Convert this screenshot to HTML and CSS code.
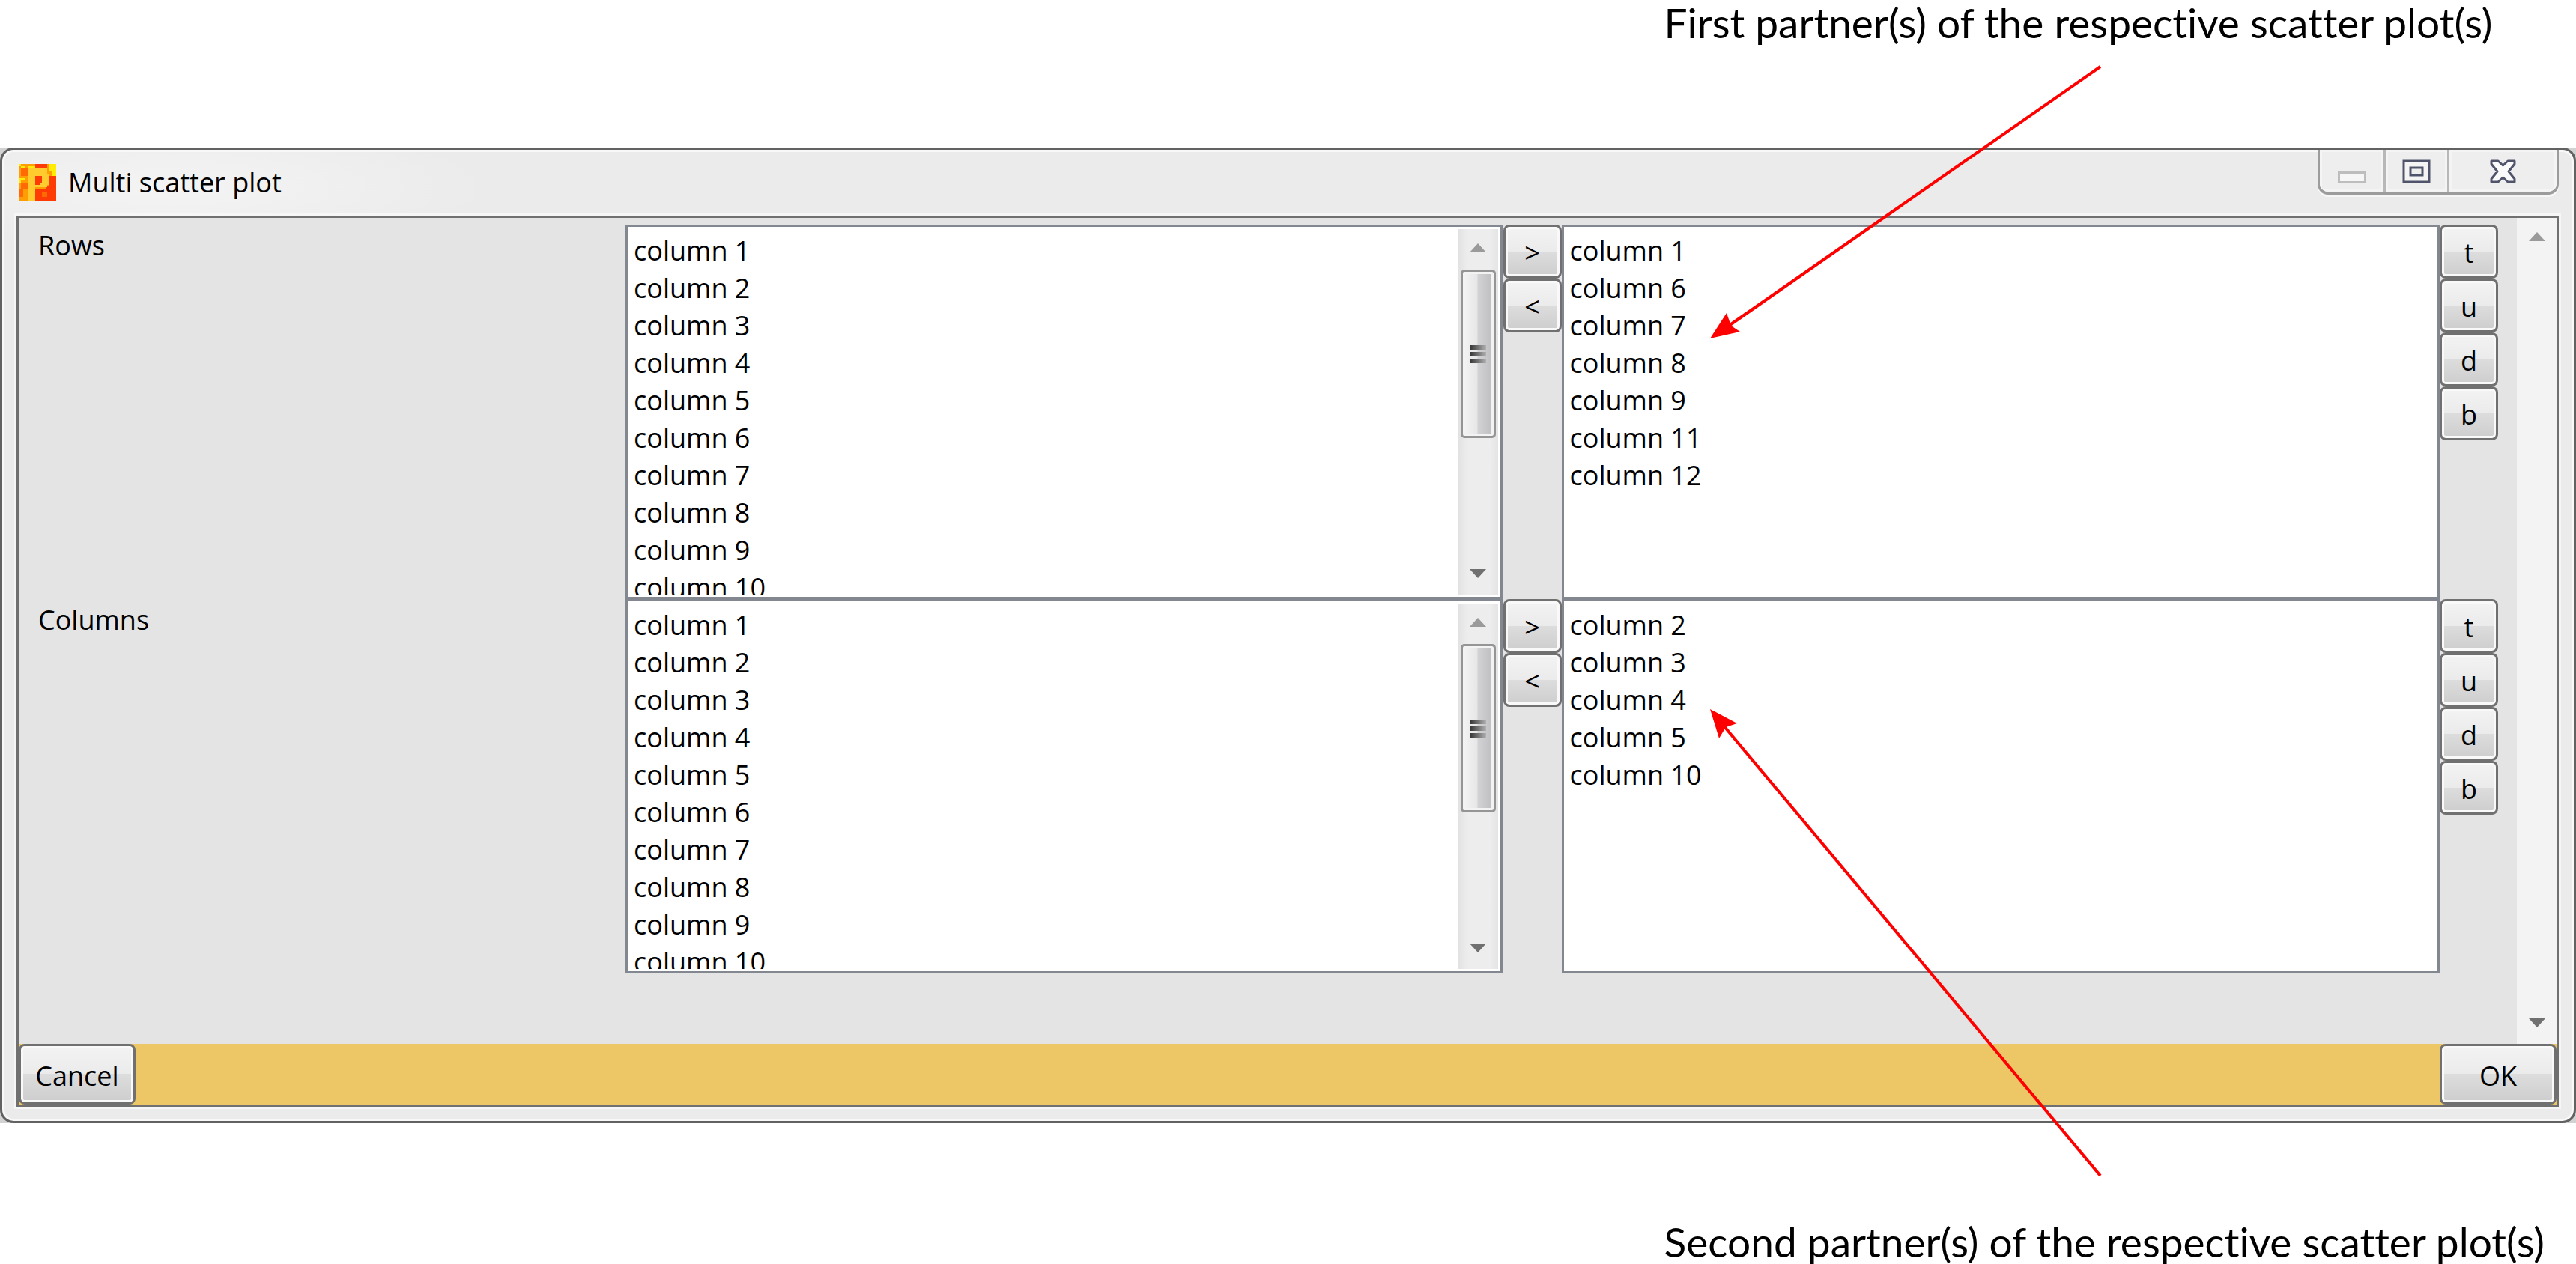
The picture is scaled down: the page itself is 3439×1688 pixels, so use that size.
FILE: index.html
```html
<!DOCTYPE html>
<html lang="en">
<head>
<meta charset="utf-8">
<title>Multi scatter plot</title>
<link rel="stylesheet" href="styles.css">
</head>
<body>
<main class="figure">
  <p class="note note-first">First partner(s) of the respective scatter plot(s)</p>

  <div class="window-corners">
    <section class="window" aria-labelledby="window-title">
      <header class="titlebar">
        <svg class="app-icon" viewBox="0 0 16 16" shape-rendering="crispEdges" aria-hidden="true">
          <path fill="#ff9d05" d="M0 0h16v16H0z"/>
          <path fill="#ff3b05" d="M7 0h5v2H7zM13 5h3v11H7V11h4l2-2zM7 5h3v4H7z"/>
          <path fill="#ff6a05" d="M1 2h3v3H1zM1 8h3v3H1zM0 11h2v3H0zM10 12h2v2h-2z"/>
          <path fill="#ffec05" d="M0 0h1v1H0zM1 1h2v1H1zM4 1h3v1H4zM13 0h3v5h-2V3h-1zM0 6h3v1H1v1H0z"/>
          <path fill="#ffcb2e" d="M4 2h8v2h1v5h-1v1H7v6H4zM7 5v4h2V8h1V5z" fill-rule="evenodd"/>
        </svg>
        <h1 class="window-title" id="window-title">Multi scatter plot</h1>
        <div class="caption-buttons">
          <button class="caption-button" type="button" aria-label="Minimize" disabled>
            <svg class="caption-icon" width="38" height="32" viewBox="0 0 38 32"><path d="M1.500 17.500h35v13h-35z" fill="#f6f6f6" stroke="#bdbdbd" stroke-width="3"/></svg>
          </button>
          <button class="caption-button" type="button" aria-label="Maximize">
            <svg class="caption-icon" width="38" height="32" viewBox="0 0 38 32"><path d="M2 2h34v28H2z" fill="#f4f4f4" stroke="#50546a" stroke-width="3"/><path d="M11 11h16v10H11z" fill="#eee" stroke="#50546a" stroke-width="3"/></svg>
          </button>
          <button class="caption-button caption-close" type="button" aria-label="Close">
            <svg class="caption-icon" width="38" height="32" viewBox="0 0 38 32"><path d="M3 2h9l6.500 6L25 2h9v4l-8 10 8 10v4h-9l-6.500-6L12 30H3v-4l8-10L3 6z" fill="#fafafa" stroke="#50546a" stroke-width="3" stroke-linejoin="round"/></svg>
          </button>
        </div>
      </header>

      <form class="client">
        <div class="scroll-view">
          <div class="fields">
            <label class="field-label" for="rows-source">Rows</label>
            <div class="listbox listbox-source">
              <select class="list" id="rows-source" multiple>
                <option>column 1</option><option>column 2</option><option>column 3</option><option>column 4</option><option>column 5</option><option>column 6</option><option>column 7</option><option>column 8</option><option>column 9</option><option>column 10</option><option>column 11</option><option>column 12</option>
              </select>
              <div class="scrollbar" aria-hidden="true">
                <svg class="scroll-arrow" viewBox="0 0 22 12"><path class="arrow-up" d="M0 12 11 0l11 12z"/></svg>
                <div class="track"><div class="thumb"><i class="grip"></i><i class="grip"></i><i class="grip"></i></div></div>
                <svg class="scroll-arrow" viewBox="0 0 22 12"><path class="arrow-down" d="M0 0h22L11 12z"/></svg>
              </div>
            </div>
            <div class="buttons">
              <button class="button" type="button">&gt;</button>
              <button class="button" type="button">&lt;</button>
            </div>
            <div class="listbox">
              <select class="list" aria-label="Selected rows" multiple>
                <option>column 1</option><option>column 6</option><option>column 7</option><option>column 8</option><option>column 9</option><option>column 11</option><option>column 12</option>
              </select>
            </div>
            <div class="buttons">
              <button class="button" type="button">t</button>
              <button class="button" type="button">u</button>
              <button class="button" type="button">d</button>
              <button class="button" type="button">b</button>
            </div>

            <label class="field-label" for="columns-source">Columns</label>
            <div class="listbox listbox-source">
              <select class="list" id="columns-source" multiple>
                <option>column 1</option><option>column 2</option><option>column 3</option><option>column 4</option><option>column 5</option><option>column 6</option><option>column 7</option><option>column 8</option><option>column 9</option><option>column 10</option><option>column 11</option><option>column 12</option>
              </select>
              <div class="scrollbar" aria-hidden="true">
                <svg class="scroll-arrow" viewBox="0 0 22 12"><path class="arrow-up" d="M0 12 11 0l11 12z"/></svg>
                <div class="track"><div class="thumb"><i class="grip"></i><i class="grip"></i><i class="grip"></i></div></div>
                <svg class="scroll-arrow" viewBox="0 0 22 12"><path class="arrow-down" d="M0 0h22L11 12z"/></svg>
              </div>
            </div>
            <div class="buttons">
              <button class="button" type="button">&gt;</button>
              <button class="button" type="button">&lt;</button>
            </div>
            <div class="listbox">
              <select class="list" aria-label="Selected columns" multiple>
                <option>column 2</option><option>column 3</option><option>column 4</option><option>column 5</option><option>column 10</option>
              </select>
            </div>
            <div class="buttons">
              <button class="button" type="button">t</button>
              <button class="button" type="button">u</button>
              <button class="button" type="button">d</button>
              <button class="button" type="button">b</button>
            </div>
          </div>
          <div class="scrollbar scrollbar-idle" aria-hidden="true">
            <svg class="scroll-arrow" viewBox="0 0 22 12"><path class="arrow-up" d="M0 12 11 0l11 12z"/></svg>
            <div class="track"></div>
            <svg class="scroll-arrow" viewBox="0 0 22 12"><path class="arrow-down" d="M0 0h22L11 12z"/></svg>
          </div>
        </div>
        <footer class="actions">
          <button class="button button-wide" type="button">Cancel</button>
          <button class="button button-wide" type="submit">OK</button>
        </footer>
      </form>
    </section>
  </div>

  <p class="note note-second">Second partner(s) of the respective scatter plot(s)</p>

  <svg class="pointers" viewBox="0 0 3439 1688" aria-hidden="true">
    <path class="pointer-line" d="M2804 89 2308 435M2804 1570 2301 969"/>
    <path class="pointer-head" d="M2283 452l22-34 6 17 12 8zM2283 947l36 19-15 5-9 15z"/>
  </svg>
</main>
</body>
</html>
```
FILE: styles.css
```css
* {
  box-sizing: border-box;
}

body {
  margin: 0;
  background: #fff;
  color: #000;
  font: 36px/50px "Open Sans", "Noto Sans", sans-serif;
}

.figure {
  position: relative;
  display: flex;
  flex-direction: column;
}

/* Notes around the dialog */
.note {
  margin: 0;
  padding-left: 64.6%;
  font: 55px/60px Lato, "Open Sans", sans-serif;
  font-variant-ligatures: none;
  white-space: nowrap;
}

.note-first {
  padding-bottom: 137px;
}

.note-second {
  padding-top: 128px;
}

.pointers {
  position: absolute;
  top: 0;
  left: 0;
  width: 100%;
  pointer-events: none;
}

.pointer-line {
  fill: none;
  stroke: #f00;
  stroke-width: 4;
}

.pointer-head {
  fill: #f00;
}

/* Dialog frame */
.window-corners {
  background: #d2d2d2;
}

.window {
  padding: 0 20px 19px 19px;
  border: 3px solid #626262;
  border-radius: 18px;
  background: radial-gradient(ellipse 420px 90px at 230px 50px, #f4f4f4, #ebebeb) #ebebeb;
  box-shadow: inset 0 0 0 3px #f8f8f8;
}

.titlebar {
  display: flex;
  align-items: flex-start;
  height: 88px;
}

.app-icon {
  flex: none;
  width: 50px;
  height: 50px;
  margin: 19px 16px 0 3px;
}

.window-title {
  flex: 1;
  margin: 19px 0 0;
  font-size: 36px;
  font-weight: 400;
  line-height: 50px;
}

.caption-buttons {
  display: flex;
  height: 60px;
  overflow: hidden;
  border: solid #9c9c9c;
  border-width: 0 3px 4px;
  border-radius: 0 0 14px 14px;
  background: #eee;
  box-shadow: 0 3px 0 #f6f6f6;
}

.caption-button {
  display: flex;
  justify-content: center;
  width: 85px;
  padding: 13px 0 0;
  border: 0;
  background: none;
  box-shadow: inset 0 0 0 3px #f4f4f4;
}

.caption-button + .caption-button {
  border-left: 3px solid #b8b8b8;
}

.caption-button.caption-close {
  width: 146px;
}

.client {
  border: 3px solid #707070;
  background: #e4e4e4;
  box-shadow: 0 0 0 3px #f6f6f6;
}

/* Fields */
.scroll-view {
  display: flex;
}

.fields {
  flex: 1;
  display: grid;
  grid-template-columns: 809px 1fr 78px 1fr 78px;
  grid-auto-rows: 500px;
  padding: 9px 25px 94px 0;
}

.field-label {
  padding: 3px 0 0 26px;
}

.listbox {
  display: flex;
  padding: 3px;
  border: 3px solid #828790;
  background: #fff;
}

.listbox-source {
  border-width: 3px 4px;
}

.list {
  flex: 1;
  min-width: 0;
  height: 100%;
  padding: 4px 0 0;
  border: 0;
  border-radius: 0;
  background: #fff;
  color: #000;
  font: inherit;
  overflow-y: auto;
  scrollbar-width: none;
}

.list option {
  height: 50px;
  padding: 0 5px;
  line-height: 50px;
}

/* Scroll bars */
.scrollbar {
  flex: none;
  display: flex;
  flex-direction: column;
  align-items: center;
  width: 53px;
  padding: 19px 0 22px;
  background: linear-gradient(90deg, #e2e2e2, #ededed 12px, #ededed 42px, #e4e4e4);
}

.scrollbar-idle {
  background: #f3f3f3;
}

.scroll-arrow {
  width: 22px;
  height: 12px;
}

.arrow-up {
  fill: #9a9a9a;
}

.arrow-down {
  fill: #707070;
}

.track {
  flex: 1;
  padding-top: 23px;
}

.thumb {
  display: flex;
  flex-direction: column;
  align-items: center;
  justify-content: center;
  gap: 3px;
  width: 47px;
  height: 225px;
  border: 3px solid #959595;
  border-radius: 5px;
  background: linear-gradient(90deg, #f4f4f4, #e7e7e9 45%, #d2d2d4 50%, #bcbcc0);
  box-shadow: inset 0 0 0 3px #f3f3f3;
}

.grip {
  width: 22px;
  height: 6px;
  background: linear-gradient(90deg, #333, #b0b0b0);
}

/* Buttons */
.buttons {
  display: flex;
  flex-direction: column;
}

.button {
  height: 72px;
  padding: 4px 0 0;
  border: 3px solid #707070;
  border-radius: 8px;
  background: linear-gradient(#f3f3f3, #ebebeb 50%, #dddddd 50%, #cdcdcd);
  box-shadow: inset 0 0 0 3px #f9f9f9;
  color: #000;
  font: inherit;
}

.actions {
  display: flex;
  justify-content: space-between;
  background: #edc765;
}

.button-wide {
  width: 156px;
  height: 81px;
}
```
